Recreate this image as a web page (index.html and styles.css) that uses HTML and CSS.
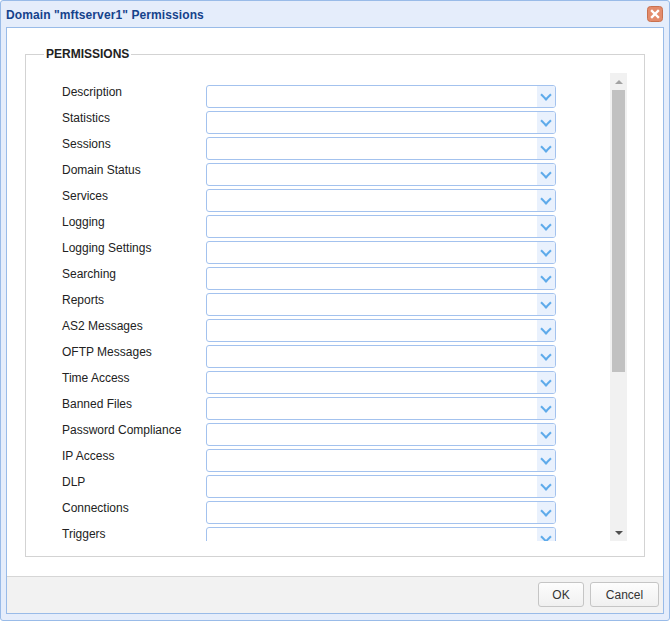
FILE: index.html
```html
<!DOCTYPE html>
<html>
<head>
<meta charset="utf-8">
<title>Permissions</title>
<link rel="stylesheet" href="styles.css">
</head>
<body>
<div class="window">
  <div class="titlebar">
    <span class="title">Domain "mftserver1" Permissions</span>
    <span class="close">
      <svg width="16" height="16" viewBox="0 0 16 16">
        <rect x="0.5" y="0.5" width="15" height="15" rx="3" ry="3" fill="#e38b6b" stroke="#c9714f"/>
        <path d="M5 5 L11 11 M11 5 L5 11" stroke="#ffffff" stroke-width="2.4" stroke-linecap="square"/>
      </svg>
    </span>
  </div>
  <div class="panel">
    <div class="content">
      <fieldset class="perms">
        <legend>PERMISSIONS</legend>
        <div class="scrollwrap">
          <div class="list">
            <div class="row"><span class="label">Description</span><span class="combo"><span class="trigger"></span></span></div>
            <div class="row"><span class="label">Statistics</span><span class="combo"><span class="trigger"></span></span></div>
            <div class="row"><span class="label">Sessions</span><span class="combo"><span class="trigger"></span></span></div>
            <div class="row"><span class="label">Domain Status</span><span class="combo"><span class="trigger"></span></span></div>
            <div class="row"><span class="label">Services</span><span class="combo"><span class="trigger"></span></span></div>
            <div class="row"><span class="label">Logging</span><span class="combo"><span class="trigger"></span></span></div>
            <div class="row"><span class="label">Logging Settings</span><span class="combo"><span class="trigger"></span></span></div>
            <div class="row"><span class="label">Searching</span><span class="combo"><span class="trigger"></span></span></div>
            <div class="row"><span class="label">Reports</span><span class="combo"><span class="trigger"></span></span></div>
            <div class="row"><span class="label">AS2 Messages</span><span class="combo"><span class="trigger"></span></span></div>
            <div class="row"><span class="label">OFTP Messages</span><span class="combo"><span class="trigger"></span></span></div>
            <div class="row"><span class="label">Time Access</span><span class="combo"><span class="trigger"></span></span></div>
            <div class="row"><span class="label">Banned Files</span><span class="combo"><span class="trigger"></span></span></div>
            <div class="row"><span class="label">Password Compliance</span><span class="combo"><span class="trigger"></span></span></div>
            <div class="row"><span class="label">IP Access</span><span class="combo"><span class="trigger"></span></span></div>
            <div class="row"><span class="label">DLP</span><span class="combo"><span class="trigger"></span></span></div>
            <div class="row"><span class="label">Connections</span><span class="combo"><span class="trigger"></span></span></div>
            <div class="row"><span class="label">Triggers</span><span class="combo"><span class="trigger"></span></span></div>
          </div>
          <div class="scrollbar">
            <span class="sb-btn sb-up"></span>
            <span class="sb-track"><span class="sb-thumb"></span></span>
            <span class="sb-btn sb-down"></span>
          </div>
        </div>
      </fieldset>
    </div>
    <div class="footer">
      <button class="btn btn-ok">OK</button>
      <button class="btn btn-cancel">Cancel</button>
    </div>
  </div>
</div>
</body>
</html>
```

FILE: styles.css
```css
* { box-sizing: border-box; }

html, body {
  margin: 0;
  padding: 0;
  background: #ffffff;
}

body {
  font-family: "Liberation Sans", Arial, sans-serif;
  font-size: 12px;
  color: #222222;
}

.window {
  width: 670px;
  height: 621px;
  border: 1px solid #99bbe8;
  border-radius: 3px;
  background: #e5edfb;
  display: flex;
  flex-direction: column;
  padding: 0 5px 6px 5px;
}

.titlebar {
  height: 26px;
  display: flex;
  align-items: center;
  justify-content: space-between;
}

.title {
  font-weight: bold;
  font-size: 12px;
  letter-spacing: 0.1px;
  color: #15428b;
  padding-top: 1px;
}

.close {
  display: flex;
  width: 16px;
  height: 16px;
  margin-right: 1px;
}

.panel {
  flex: 1;
  border: 1px solid #99bbe8;
  background: #ffffff;
  display: flex;
  flex-direction: column;
}

.content {
  flex: 1;
  padding: 19px 18px 18px 18px;
  display: flex;
  flex-direction: column;
}

.perms {
  margin: 0;
  border: 1px solid #d3d3d3;
  padding: 12px 17px 15px 18px;
  min-width: 0;
}

.perms legend {
  font-weight: bold;
  font-size: 12px;
  line-height: 14px;
  color: #222222;
  padding: 0 2px;
}

.scrollwrap {
  display: flex;
  height: 468px;
}

.list {
  flex: 1;
  overflow: hidden;
  padding: 12px 0 0 18px;
}

.row {
  display: flex;
  align-items: flex-start;
  height: 23px;
  margin-bottom: 3px;
}

.label {
  width: 144px;
  line-height: 14px;
  color: #222222;
  white-space: nowrap;
}

.combo {
  width: 350px;
  height: 23px;
  flex-shrink: 0;
  border: 1px solid #a3c2ee;
  border-radius: 3px;
  display: flex;
  justify-content: flex-end;
  overflow: hidden;
  background: #ffffff;
}

.trigger {
  width: 18px;
  height: 100%;
  background: #e9f1fd;
  position: relative;
}

.trigger::after {
  content: "";
  position: absolute;
  left: 5px;
  top: 5px;
  width: 6px;
  height: 6px;
  border-right: 2px solid #5eaaea;
  border-bottom: 2px solid #5eaaea;
  transform: rotate(45deg);
}

.scrollbar {
  width: 17px;
  background: #f1f1f1;
  display: flex;
  flex-direction: column;
}

.sb-btn {
  height: 17px;
  display: flex;
  align-items: center;
  justify-content: center;
}

.sb-up::before {
  content: "";
  width: 0;
  height: 0;
  border-left: 4px solid transparent;
  border-right: 4px solid transparent;
  border-bottom: 4px solid #a3a3a3;
}

.sb-down::before {
  content: "";
  width: 0;
  height: 0;
  border-left: 4px solid transparent;
  border-right: 4px solid transparent;
  border-top: 4px solid #505050;
}

.sb-track {
  flex: 1;
  padding: 0 2px;
  display: flex;
  flex-direction: column;
}

.sb-thumb {
  height: 282px;
  background: #c1c1c1;
}

.footer {
  height: 37px;
  border-top: 1px solid #d6d6d6;
  background: #f2f2f2;
  display: flex;
  justify-content: flex-end;
  align-items: flex-start;
  gap: 6px;
  padding: 5px 4px 0 0;
}

.btn {
  height: 25px;
  border: 1px solid #c5c5c5;
  border-radius: 3px;
  background: linear-gradient(#fdfdfd, #f0f0f0);
  font-family: "Liberation Sans", Arial, sans-serif;
  font-size: 12px;
  color: #333333;
  padding: 0;
}

.btn-ok { width: 46px; }
.btn-cancel { width: 69px; }
```
